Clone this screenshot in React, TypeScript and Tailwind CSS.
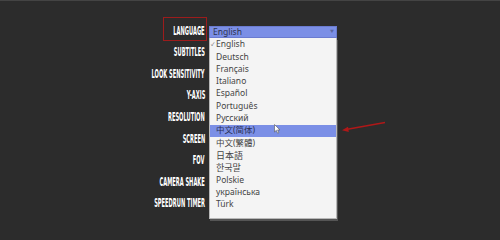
const labels = [
  "LANGUAGE",
  "SUBTITLES",
  "LOOK SENSITIVITY",
  "Y-AXIS",
  "RESOLUTION",
  "SCREEN",
  "FOV",
  "CAMERA SHAKE",
  "SPEEDRUN TIMER",
];

const languages = [
  "English",
  "Deutsch",
  "Français",
  "Italiano",
  "Español",
  "Português",
  "Русский",
  "中文(简体)",
  "中文(繁體)",
  "日本語",
  "한국말",
  "Polskie",
  "українська",
  "Türk",
];

export default function App() {
  return (
    <div className="relative w-[500px] h-[240px] overflow-hidden bg-[#2c2c2c] border-t border-[#444]">
      <div className="flex">
        {/* setting names */}
        <div className="w-[205px] pt-[19px] flex flex-col">
          {labels.map((label) => (
            <div key={label} className="h-[21.6px] flex items-center justify-end">
              <span
                className="inline-block origin-right scale-x-[0.41] whitespace-nowrap text-[12.5px] font-bold leading-none text-white"
                style={{ fontFamily: '"DejaVu Sans", sans-serif' }}
              >
                {label}
              </span>
            </div>
          ))}
        </div>

        {/* language dropdown */}
        <div
          className="ml-[4px] mt-[25px] w-[128px] text-[8.5px] text-[#444]"
          style={{ fontFamily: '"Noto Sans", "Noto Sans CJK SC", sans-serif' }}
        >
          <div className="h-[12px] flex items-center justify-between pl-[3px] pr-[2px] bg-[#7b8fe6] border border-[#6a7bd0] text-[#2f3550]">
            <span>English</span>
            <span className="text-[4px] text-[#5a66a0]">▼</span>
          </div>
          <div className="bg-[#f4f4f4] border border-[#b8b8b8] border-t-0 pt-[0.5px] pb-[7px] shadow-[1px_2px_0_#555]">
            {languages.map((lang, i) => (
              <div
                key={lang}
                className={`h-[12.3px] flex items-center pl-[6px] relative ${i === 7 ? "bg-[#7b8fe6] text-[#2a2f55]" : ""}`}
              >
                {i === 0 && <span className="absolute left-[1px] text-[5px]">✓</span>}
                <span className={i === 9 || i === 10 ? "text-[9px]" : ""}>{lang}</span>
              </div>
            ))}
          </div>
        </div>
      </div>

      {/* red annotation box round LANGUAGE */}
      <div className="absolute left-[163px] top-[16px] w-[44px] h-[24px] border border-[#9c1c1c]" />

      {/* mouse cursor */}
      <svg className="absolute left-[274px] top-[123px]" width="7" height="10" viewBox="0 0 7 10">
        <path d="M0.5 0.5 L0.5 8 L2.3 6.3 L3.6 9.2 L4.8 8.7 L3.6 5.9 L6 5.9 Z" fill="#fff" stroke="#555" strokeWidth="0.6" />
      </svg>

      {/* red arrow */}
      <svg className="absolute left-[338px] top-[116px]" width="52" height="18" viewBox="0 0 52 18">
        <line x1="47" y1="5.5" x2="8" y2="12.5" stroke="#b01818" strokeWidth="1.4" />
        <path d="M4 13.3 L10 9.8 L10.8 15 Z" fill="#b01818" />
      </svg>
    </div>
  );
}
